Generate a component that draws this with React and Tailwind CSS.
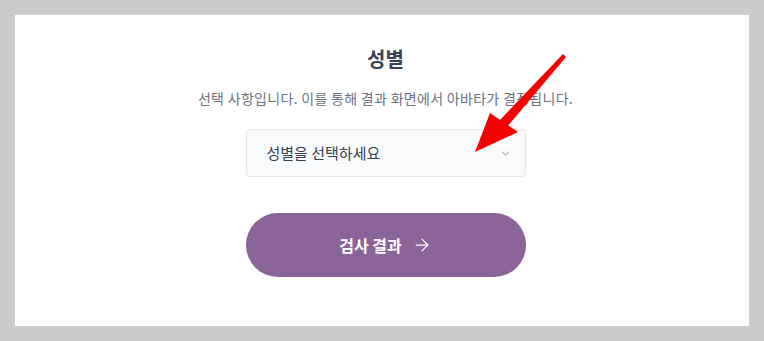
import { ChevronDown, ArrowRight } from 'lucide-react';

export default function App() {
  return (
    <div className="w-[764px] h-[341px] bg-[#cbcbcb] p-[15px] relative" style={{ fontFamily: '"Noto Sans CJK KR", "Noto Sans", sans-serif' }}>
      <div className="w-[734px] h-[311px] bg-white flex flex-col items-center pl-[7px]">
        <h2 className="mt-[30px] text-[20px] leading-[28px] font-bold text-[#374151]">성별</h2>
        <p className="mt-[15px] text-[14px] leading-[20px] tracking-[0.3px] text-[#6b7280]">선택 사항입니다. 이를 통해 결과 화면에서 아바타가 결정됩니다.</p>
        <div className="mt-[21px] w-[280px] h-[48px] bg-[#f9fafb] border border-[#e5e7eb] rounded-[4px] flex items-center justify-between pl-[20px] pr-[13px]">
          <span className="text-[15px] text-[#374151]">성별을 선택하세요</span>
          <ChevronDown size={13} strokeWidth={1.5} className="text-[#6b7280]" />
        </div>
        <button className="mt-[36px] w-[280px] h-[64px] rounded-full bg-[#8a6398] flex items-center justify-center gap-[10px] text-white">
          <span className="text-[16px] font-bold">검사 결과</span>
          <ArrowRight size={20} strokeWidth={1.5} />
        </button>
      </div>
      <svg className="absolute left-0 top-0 pointer-events-none" width="764" height="341" viewBox="0 0 764 341">
        <polygon points="563,54 566,57 506,128 499,121" fill="#f40000" />
        <polygon points="475,152 490,113 518,132" fill="#f40000" />
      </svg>
    </div>
  );
}
